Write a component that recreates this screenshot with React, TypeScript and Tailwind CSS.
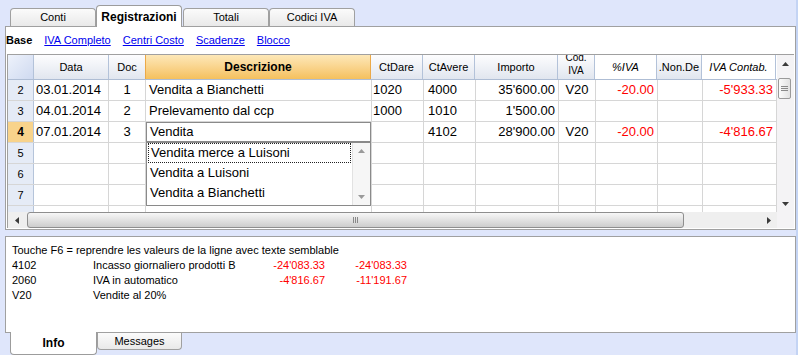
import type { ReactNode } from "react"

// larghezze colonne della griglia (px, bordo destro incluso)
const COLS = [
  "w-[26px]",
  "w-[75px]",
  "w-[37px]",
  "w-[226px]",
  "w-[52px]",
  "w-[52px]",
  "w-[83px]",
  "w-[37px]",
  "w-[62px]",
  "w-[45px]",
  "w-[74px]",
]

// allineamento / colore di ogni colonna
const ALIGN = [
  "justify-center",
  "pl-[2px]",
  "justify-center",
  "pl-[3px]",
  "pl-px",
  "pl-[4px]",
  "justify-end pr-[3px]",
  "justify-center",
  "justify-end pr-[3px] text-[#ff0000]",
  "",
  "justify-end pr-[3px] text-[#ff0000]",
]

const ROWS = [
  ["2", "03.01.2014", "1", "Vendita a Bianchetti", "1020", "4000", "35'600.00", "V20", "-20.00", "", "-5'933.33"],
  ["3", "04.01.2014", "2", "Prelevamento dal ccp", "1000", "1010", "1'500.00", "", "", "", ""],
  ["4", "07.01.2014", "3", "Vendita", "", "4102", "28'900.00", "V20", "-20.00", "", "-4'816.67"],
  ["5", "", "", "", "", "", "", "", "", "", ""],
  ["6", "", "", "", "", "", "", "", "", "", ""],
  ["7", "", "", "", "", "", "", "", "", "", ""],
  ["", "", "", "", "", "", "", "", "", "", ""],
]

const INFO = [
  { code: "4102", desc: "Incasso giornaliero prodotti B", a: "-24'083.33", b: "-24'083.33" },
  { code: "2060", desc: "IVA in automatico", a: "-4'816.67", b: "-11'191.67" },
  { code: "V20", desc: "Vendite al 20%", a: "", b: "" },
]

const SUGGEST = ["Vendita merce a Luisoni", "Vendita a Luisoni", "Vendita a Bianchetti"]

function Tri({ dir, className }: { dir: "up" | "down" | "left" | "right"; className?: string }) {
  const vert = dir === "up" || dir === "down"
  const w = vert ? 7 : 4
  const h = vert ? 4 : 7
  const pts = { up: "0,4 3.5,0 7,4", down: "0,0 7,0 3.5,4", left: "4,0 4,7 0,3.5", right: "0,0 0,7 4,3.5" }[dir]
  return (
    <svg width={w} height={h} viewBox={`0 0 ${w} ${h}`} className={className}>
      <polygon points={pts} fill="currentColor" />
    </svg>
  )
}

function TopTab({ label, className = "" }: { label: string; className?: string }) {
  return (
    <div
      className={`w-[86px] h-[18px] border border-b-0 border-[#a0a0a0] rounded-t-[4px] bg-linear-to-b from-[#fbfbfb] to-[#e9e9e9] flex items-center justify-center ${className}`}
    >
      {label}
    </div>
  )
}

function Cell({ i, children, className = "" }: { i: number; children?: ReactNode; className?: string }) {
  return (
    <div
      className={`${COLS[i]} shrink-0 h-full border-r border-[#d6d6d6] flex items-center overflow-hidden whitespace-nowrap ${className}`}
    >
      {children}
    </div>
  )
}

function Header() {
  const heads: { label: ReactNode; cls?: string }[] = [
    { label: "", cls: "bg-linear-to-br from-[#eef2fb] to-[#cfdaf0]" },
    { label: "Data" },
    { label: "Doc" },
    {
      label: "Descrizione",
      cls: "font-bold text-[12px] bg-linear-to-b from-[#fde8b8] to-[#f5c05c] border-l border-[#eba948] -ml-px",
    },
    { label: "CtDare" },
    { label: "CtAvere" },
    { label: "Importo" },
    {
      label: (
        <div className="-mt-[7px] flex flex-col items-center leading-[13px] text-[10px]">
          <span>Cod.</span>
          <span>IVA</span>
        </div>
      ),
    },
    { label: "%IVA", cls: "italic" },
    { label: ".Non.De" },
    { label: "IVA Contab.", cls: "italic" },
  ]
  return (
    <div className="flex h-[25px] border-b border-[#aebdd4] text-[11px]">
      {heads.map((h, i) => (
        <div
          key={i}
          className={`${COLS[i]} shrink-0 h-full border-r border-[#b3c2d9] flex items-center justify-center overflow-hidden whitespace-nowrap ${
            h.cls ?? "bg-linear-to-b from-[#fdfdfe] to-[#e1e6ef]"
          }`}
        >
          {h.label}
        </div>
      ))}
    </div>
  )
}

function VScroll() {
  return (
    <div className="w-[17px] h-[157px] bg-[#f4f3f5] flex flex-col">
      <div className="h-[17px] flex items-center justify-center text-[#3a3a3a]">
        <Tri dir="up" />
      </div>
      <div className="mt-[6px] ml-px w-[13px] h-[21px] rounded-[2px] border border-[#9a9a9a] bg-linear-to-r from-[#fbfbfb] to-[#e2e2e2] flex flex-col items-center justify-center gap-px">
        <div className="w-[7px] h-px bg-[#8a8a8a]" />
        <div className="w-[7px] h-px bg-[#8a8a8a]" />
        <div className="w-[7px] h-px bg-[#8a8a8a]" />
      </div>
      <div className="flex-1" />
      <div className="h-[17px] flex items-center justify-center text-[#3a3a3a]">
        <Tri dir="down" />
      </div>
    </div>
  )
}

function HScroll() {
  return (
    <div className="flex h-[16px] w-[786px]">
      <div className="w-[769px] flex bg-[#efefef]">
        <div className="w-[17px] flex items-center justify-center text-[#3a3a3a]">
          <Tri dir="left" />
        </div>
        <div className="ml-[2px] w-[657px] h-full rounded-[3px] border border-[#8e8e8e] bg-linear-to-b from-[#f7f7f7] to-[#cdcdcd] flex items-center justify-center gap-px">
          <div className="w-px h-[6px] bg-[#888]" />
          <div className="w-px h-[6px] bg-[#888]" />
          <div className="w-px h-[6px] bg-[#888]" />
        </div>
        <div className="flex-1" />
        <div className="w-[17px] flex items-center justify-center text-[#3a3a3a]">
          <Tri dir="right" />
        </div>
      </div>
      <div className="w-[17px] bg-[#f4f3f5]" />
    </div>
  )
}

export default function App() {
  return (
    <div className="w-[798px] h-[355px] overflow-hidden bg-[#dfe6fb] border-r-2 border-[#c4d4f4] flex flex-col font-['Liberation_Sans',Arial,sans-serif] text-black">
      {/* schede in alto */}
      <div className="flex items-end h-[26px] pl-[10px] text-[11px] shrink-0">
        <TopTab label="Conti" />
        <div className="relative z-10 -mb-px w-[86px] h-[22px] bg-white border border-b-0 border-[#9c9c9c] rounded-t-[4px] flex items-center justify-center font-bold text-[12px]">
          Registrazioni
        </div>
        <TopTab label="Totali" className="ml-px" />
        <TopTab label="Codici IVA" className="w-[85px]" />
      </div>

      {/* pannello registrazioni */}
      <div className="ml-[5px] w-[791px] h-[204px] shrink-0 bg-white border border-[#a0a0a0] flex flex-col">
        <div className="h-[27px] flex items-center gap-[12px] text-[11px]">
          <span className="font-bold">Base</span>
          {["IVA Completo", "Centri Costo", "Scadenze", "Blocco"].map((l) => (
            <span key={l} className="text-[#0000ee] underline">
              {l}
            </span>
          ))}
        </div>

        <div className="ml-px w-[787px] border-t border-l border-[#a0a0a0] flex flex-col">
          <div className="flex">
            <div className="relative w-[769px] h-[157px] overflow-hidden">
              <Header />
              {ROWS.map((r, ri) => {
                const cur = r[0] === "4"
                return (
                  <div key={ri} className="flex h-[21px] border-b border-[#d6d6d6] text-[13px]">
                    <div
                      className={`${COLS[0]} shrink-0 h-full border-r border-[#b5c4da] flex items-center justify-center ${
                        cur ? "bg-[#f8d38b] font-bold text-[12px]" : "bg-[#e5ebf6] text-[11px]"
                      }`}
                    >
                      {r[0]}
                    </div>
                    {r.slice(1).map((v, ci) =>
                      cur && ci + 1 === 3 ? (
                        <Cell key={ci} i={3}>
                          <div className="w-full h-full border border-[#8a8a8a] flex items-center pl-[3px]">{v}</div>
                        </Cell>
                      ) : (
                        <Cell key={ci} i={ci + 1} className={ALIGN[ci + 1]}>
                          {v}
                        </Cell>
                      )
                    )}
                  </div>
                )
              })}

              {/* lista di completamento */}
              <div className="absolute left-[138px] top-[87px] w-[225px] h-[64px] bg-white border border-[#8a8a8a] flex text-[13px]">
                <div className="flex-1 flex flex-col">
                  {SUGGEST.map((s, i) => (
                    <div
                      key={s}
                      className={`h-[20px] flex items-center whitespace-nowrap ${
                        i === 0 ? "mx-px border border-dotted border-[#222] pl-[2px]" : "pl-[3px]"
                      }`}
                    >
                      {s}
                    </div>
                  ))}
                </div>
                <div className="w-[18px] bg-[#f6f6f6] border-l border-[#e2e2e2] flex flex-col items-center justify-between py-[6px] text-[#9a9a9a]">
                  <Tri dir="up" />
                  <Tri dir="down" />
                </div>
              </div>
            </div>
            <VScroll />
          </div>
          <HScroll />
        </div>
      </div>

      {/* pannello info */}
      <div className="mt-[6px] ml-[5px] w-[791px] h-[97px] shrink-0 bg-white border border-[#a0a0a0] pt-[6px] pl-[6px] text-[11px] leading-[15px]">
        <div>Touche F6 = reprendre les valeurs de la ligne avec texte semblable</div>
        {INFO.map((l) => (
          <div key={l.code} className="flex whitespace-nowrap">
            <span className="w-[81px]">{l.code}</span>
            <span className="w-[180px]">{l.desc}</span>
            <span className="w-[52px] text-right text-[#ff0000]">{l.a}</span>
            <span className="w-[82px] text-right text-[#ff0000]">{l.b}</span>
          </div>
        ))}
      </div>
      <div className="flex items-start pl-[10px] shrink-0">
        <div className="relative z-10 -mt-px w-[87px] h-[23px] bg-white border border-t-0 border-[#9c9c9c] rounded-b-[4px] flex items-center justify-center font-bold text-[12px]">
          Info
        </div>
        <div className="w-[85px] h-[17px] border border-t-0 border-[#a0a0a0] rounded-b-[4px] bg-linear-to-t from-[#e9e9e9] to-[#fbfbfb] flex items-center justify-center text-[11px]">
          Messages
        </div>
      </div>
    </div>
  )
}
